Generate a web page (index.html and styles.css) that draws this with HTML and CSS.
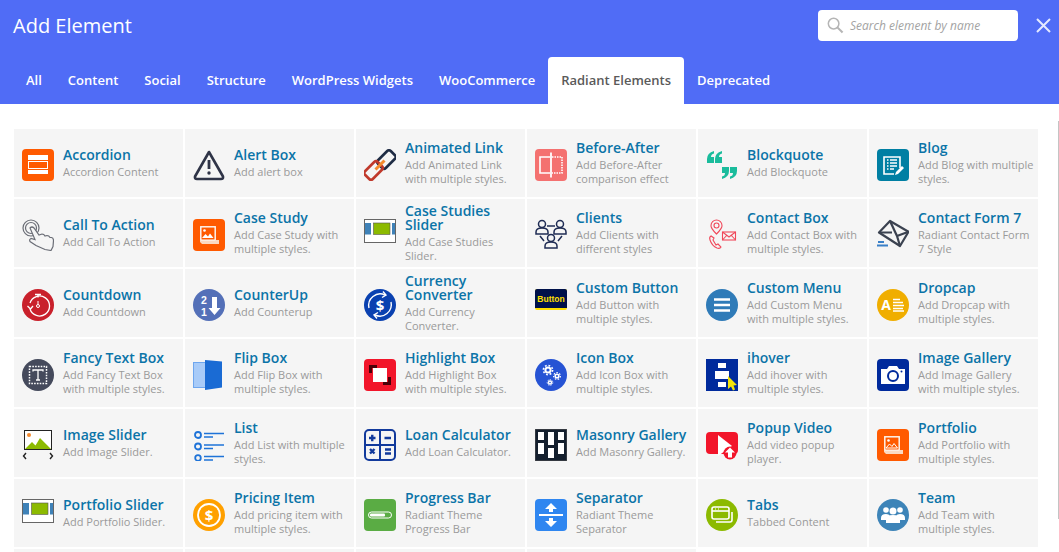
FILE: index.html
```html
<!DOCTYPE html>
<html lang="en">
<head>
    <meta charset="UTF-8">
    <meta name="viewport" content="width=device-width, initial-scale=1.0">
    <title>Add Element</title>
    <link rel="stylesheet" href="styles.css">
</head>
<body>

    <header class="top">
        <div class="top-row">
            <h1>Add Element</h1>
            <div class="search">
                <svg class="search-icon" viewBox="0 0 18 18"><circle cx="7" cy="7" r="5.6" fill="none" stroke="#b5b5b5" stroke-width="1.6"/><path d="M11 11l5.5 5.5" stroke="#b5b5b5" stroke-width="2.2"/></svg>
                <span class="search-text">Search element by name</span>
            </div>
            <svg class="close" viewBox="0 0 15 15"><path d="M1 1l13 13M14 1L1 14" stroke="#e4e9ff" stroke-width="2"/></svg>
        </div>
        <nav class="tabs">
            <a class="tab">All</a>
            <a class="tab">Content</a>
            <a class="tab">Social</a>
            <a class="tab">Structure</a>
            <a class="tab">WordPress Widgets</a>
            <a class="tab">WooCommerce</a>
            <a class="tab active">Radiant Elements</a>
            <a class="tab">Deprecated</a>
        </nav>
    </header>

    <section class="grid">

        <!-- row 1 -->
        <div class="item">
            <svg class="icon" viewBox="0 0 32 32"><rect width="32" height="32" rx="4" fill="#ff5a00"/><rect x="6" y="6" width="20" height="5" fill="#fff"/><rect x="6.500" y="12.500" width="19" height="7" fill="none" stroke="#fff"/><rect x="6" y="21" width="20" height="4" fill="#fff"/></svg>
            <div class="text"><div class="name">Accordion</div><div class="desc">Accordion Content</div></div>
        </div>
        <div class="item">
            <svg class="icon" viewBox="0 0 32 32"><path d="M16 3L30 27.500Q30.500 30 28 30H4Q1.500 30 2 27.500Z" fill="none" stroke="#2f3447" stroke-width="2.600" stroke-linejoin="round"/><path d="M16 11v9" stroke="#2f3447" stroke-width="2.800"/><circle cx="16" cy="24" r="1.700" fill="#2f3447"/></svg>
            <div class="text"><div class="name">Alert Box</div><div class="desc">Add alert box</div></div>
        </div>
        <div class="item">
            <svg class="icon" viewBox="0 0 32 32"><rect x="17" y="1.500" width="11" height="18" rx="2.500" transform="rotate(45 22.500 10.500)" fill="none" stroke="#1f2c44" stroke-width="2.600"/><rect x="4" y="12.500" width="11" height="18" rx="2.500" transform="rotate(45 9.500 21.500)" fill="none" stroke="#c0392b" stroke-width="2.600"/><path d="M11.500 20.500L20.500 11.500" stroke="#f58a2c" stroke-width="3"/></svg>
            <div class="text"><div class="name">Animated Link</div><div class="desc">Add Animated Link with multiple styles.</div></div>
        </div>
        <div class="item">
            <svg class="icon" viewBox="0 0 32 32"><rect width="32" height="32" rx="4" fill="#f47170"/><path d="M15 8H5v16h10" fill="none" stroke="#fff" stroke-width="1.600"/><path d="M17 8h10v16H17" fill="none" stroke="#fff" stroke-width="1.600" stroke-dasharray="1.500 1"/><path d="M16 3.500v25" stroke="#fff" stroke-width="1.800"/></svg>
            <div class="text"><div class="name">Before-After</div><div class="desc">Add Before-After comparison effect</div></div>
        </div>
        <div class="item">
            <svg class="icon" viewBox="0 0 32 32"><path d="M8 2Q1 4 1 10v4h7V8H5Q5 5 8 4.500ZM16 2Q9 4 9 10v4h7V8h-3q0-3 3-3.500Z" fill="#1abc9c"/><path d="M16 18v6h3q0 3-3 3.500V30q7-2 7-8v-4ZM24 18v6h3q0 3-3 3.500V30q7-2 7-8v-4Z" fill="#1abc9c"/></svg>
            <div class="text"><div class="name">Blockquote</div><div class="desc">Add Blockquote</div></div>
        </div>
        <div class="item">
            <svg class="icon" viewBox="0 0 32 32"><rect width="32" height="32" rx="4" fill="#007fa3"/><path d="M23 19V8H7v17h10" fill="none" stroke="#fff" stroke-width="1.600"/><path d="M10 11h1.500M13 11h7M10 14h1.500M13 14h7M10 17h1.500M13 17h7M10 20h1.500M13 20h4" stroke="#fff" stroke-width="1.400"/><path d="M18 26l1-3 6-6 2 2-6 6Z" fill="#fff"/></svg>
            <div class="text"><div class="name">Blog</div><div class="desc">Add Blog with multiple styles.</div></div>
        </div>

        <!-- row 2 -->
        <div class="item">
            <svg class="icon" viewBox="0 0 32 32"><g fill="none" stroke="#6a6d76" stroke-width="1.200"><circle cx="9" cy="9" r="8"/><circle cx="9" cy="9" r="5.500"/><path d="M8 9q2-2 4 0l5 7 3-1q2 0 3 2l2-.5q2 0 3 2l1.500 0q2 .5 2 3l-.5 6-2 4-6-1-9-4-6-4q-1-2 1-3l4 1Z" fill="#f5f5f5"/></g></svg>
            <div class="text"><div class="name">Call To Action</div><div class="desc">Add Call To Action</div></div>
        </div>
        <div class="item">
            <svg class="icon" viewBox="0 0 32 32"><rect width="32" height="32" rx="4" fill="#ff5a00"/><path d="M7 7h16v14h3v4H9l-2-2Z" fill="#fbd9c2"/><rect x="8" y="8" width="14" height="13" fill="#ff5a00" stroke="#fff"/><circle cx="11.500" cy="11.500" r="1.300" fill="#fff"/><path d="M9 19l3.500-4 2.500 2.500 2-3 3.500 4.500Z" fill="#fff"/></svg>
            <div class="text"><div class="name">Case Study</div><div class="desc">Add Case Study with multiple styles.</div></div>
        </div>
        <div class="item">
            <svg class="icon" viewBox="0 0 32 32"><rect x=".5" y=".5" width="31" height="23" fill="#fff" stroke="#666"/><rect x="1" y="4" width="6" height="11.500" fill="#3f82b8"/><rect x="28" y="4" width="3" height="11.500" fill="#3f82b8"/><rect x="9.500" y="4" width="16.500" height="11.500" fill="#8cba00" stroke="#555" stroke-width=".6"/></svg>
            <div class="text"><div class="name">Case Studies Slider</div><div class="desc">Add Case Studies Slider.</div></div>
        </div>
        <div class="item">
            <svg class="icon" viewBox="0 0 32 32"><g fill="none" stroke="#1f2c54" stroke-width="1.500"><circle cx="7" cy="5" r="3.500"/><path d="M1 15v-2q0-4 6-4t6 4v2Z"/><circle cx="25" cy="5" r="3.500"/><path d="M19 15v-2q0-4 6-4t6 4v2Z"/><circle cx="16" cy="19" r="3.500"/><path d="M10 29v-2q0-4 6-4t6 4v2Z"/><path d="M12 7h8M5 17l4 5M27 17l-4 5"/></g></svg>
            <div class="text"><div class="name">Clients</div><div class="desc">Add Clients with different styles</div></div>
        </div>
        <div class="item">
            <svg class="icon" viewBox="0 0 32 32"><g fill="none" stroke="#f0485a" stroke-width="1.100"><path d="M10.500 15Q4.500 9 5 6.500a5.500 5.500 0 0 1 11 0Q16.500 9 10.500 15Z"/><circle cx="10.500" cy="6.500" r="2.500"/><rect x="16.500" y="13" width="13" height="8"/><path d="M16.500 13l6.500 5 6.500-5M16.500 21l4.500-5M29.500 21L25 16"/><path d="M5 17q-2 1-1 4 2 6 7 8 3 1 4-1l-3-3-2 1-3-5 1-2Z"/></g></svg>
            <div class="text"><div class="name">Contact Box</div><div class="desc">Add Contact Box with multiple styles.</div></div>
        </div>
        <div class="item">
            <svg class="icon" viewBox="0 0 32 32"><g fill="none" stroke="#3b4250" stroke-width="2.200" stroke-linejoin="round"><path d="M2 13.500L13 2l18.500 10.700L23 27Z"/><path d="M13 2l7 15 11.500-4.300M2 13.500l13 0M23 27l-3-10"/></g><path d="M1 23h6M0 26.500h11" stroke="#3a80c8" stroke-width="1.800"/></svg>
            <div class="text"><div class="name">Contact Form 7</div><div class="desc">Radiant Contact Form 7 Style</div></div>
        </div>

        <!-- row 3 -->
        <div class="item">
            <svg class="icon" viewBox="0 0 32 32"><circle cx="16" cy="16" r="16" fill="#c9202b"/><path d="M8 14a10 10 0 1 1 0 6" fill="none" stroke="#fff" stroke-width="1.300"/><path d="M5.500 17l3 3 2.500-3" fill="none" stroke="#fff" stroke-width="1.300"/><path d="M13 5.500h6M16 5.500v3" stroke="#fff" stroke-width="1.300"/><circle cx="16" cy="17" r="1.500" fill="none" stroke="#fff"/><path d="M16 12v3.500" stroke="#fff"/></svg>
            <div class="text"><div class="name">Countdown</div><div class="desc">Add Countdown</div></div>
        </div>
        <div class="item">
            <svg class="icon" viewBox="0 0 32 32"><circle cx="16" cy="16" r="16" fill="#5470b8"/><text class="svg-num" x="8" y="14.800">2</text><text class="svg-num" x="8" y="27.300">1</text><path d="M19 8h5v11h3.500L21.500 26l-6-7H19Z" fill="#fff"/></svg>
            <div class="text"><div class="name">CounterUp</div><div class="desc">Add Counterup</div></div>
        </div>
        <div class="item">
            <svg class="icon" viewBox="0 0 32 32"><circle cx="16" cy="16" r="16" fill="#0a41b0"/><path d="M5 19a11.500 11.500 0 0 1 16-13M27 13a11.500 11.500 0 0 1-16 13" fill="none" stroke="#fff" stroke-width="1.400"/><path d="M19 2.500l3 3.500-4 2.500M13 29.500L10 26l4-2.500" fill="none" stroke="#fff" stroke-width="1.400"/><text class="svg-dollar" x="16" y="21.500">$</text></svg>
            <div class="text"><div class="name">Currency Converter</div><div class="desc">Add Currency Converter.</div></div>
        </div>
        <div class="item">
            <svg class="icon" viewBox="0 0 32 32"><rect width="32" height="21" rx="2" fill="#ffe000"/><path d="M0 2a2 2 0 0 1 2-2h28a2 2 0 0 1 2 2v17H0Z" fill="#00114a"/><text class="svg-button" x="16" y="12.500">Button</text></svg>
            <div class="text"><div class="name">Custom Button</div><div class="desc">Add Button with multiple styles.</div></div>
        </div>
        <div class="item">
            <svg class="icon" viewBox="0 0 32 32"><circle cx="16" cy="16" r="16" fill="#2f7bb8"/><path d="M8 10.500h16M8 16h16M8 21.500h16" stroke="#fff" stroke-width="2.600"/></svg>
            <div class="text"><div class="name">Custom Menu</div><div class="desc">Add Custom Menu with multiple styles.</div></div>
        </div>
        <div class="item">
            <svg class="icon" viewBox="0 0 32 32"><circle cx="16" cy="16" r="16" fill="#f0ae00"/><text class="svg-drop" x="9" y="21">A</text><path d="M16 10.500h7M16 13.500h10M16 16.500h11M16 19.500h10M16 22h11" stroke="#fff" stroke-width="1.500"/></svg>
            <div class="text"><div class="name">Dropcap</div><div class="desc">Add Dropcap with multiple styles.</div></div>
        </div>

        <!-- row 4 -->
        <div class="item">
            <svg class="icon" viewBox="0 0 32 32"><circle cx="16" cy="16" r="16" fill="#454a5c"/><rect x="7.500" y="7.500" width="17" height="17" fill="none" stroke="#fff" stroke-width="1.500" stroke-dasharray="1.600 1.200"/><path d="M11 12.500V11h10v1.500M16 11v10M14 21h4" fill="none" stroke="#fff" stroke-width="1.300"/></svg>
            <div class="text"><div class="name">Fancy Text Box</div><div class="desc">Add Fancy Text Box with multiple styles.</div></div>
        </div>
        <div class="item">
            <svg class="icon" viewBox="0 0 32 32"><rect x=".5" y="3.500" width="12" height="25" fill="#a8cbf8" stroke="#6ea6ee"/><path d="M12 1l17 1.500v26L12 31Z" fill="#1a6bd4"/></svg>
            <div class="text"><div class="name">Flip Box</div><div class="desc">Add Flip Box with multiple styles.</div></div>
        </div>
        <div class="item">
            <svg class="icon" viewBox="0 0 32 32"><rect width="32" height="32" rx="4" fill="#f2152a"/><path d="M5 14V6h8v3H8v5ZM27 18v8h-8v-3h5v-5Z" fill="#4a0008"/><rect x="9" y="9" width="14" height="14" fill="#fff"/></svg>
            <div class="text"><div class="name">Highlight Box</div><div class="desc">Add Highlight Box with multiple styles.</div></div>
        </div>
        <div class="item">
            <svg class="icon" viewBox="0 0 32 32"><circle cx="16" cy="16" r="16" fill="#2653d4"/><g fill="none" stroke="#fff"><circle cx="13" cy="11" r="2.600" stroke-width="2"/><circle cx="13" cy="11" r="4.600" stroke-width="1.600" stroke-dasharray="1.800 1.800"/><circle cx="22" cy="17" r="1.800" stroke-width="1.600"/><circle cx="22" cy="17" r="3.400" stroke-width="1.200" stroke-dasharray="1.500 1.500"/><circle cx="15" cy="23.500" r="1.500" stroke-width="1.400"/><circle cx="15" cy="23.500" r="2.800" stroke-width="1" stroke-dasharray="1.300 1.200"/></g></svg>
            <div class="text"><div class="name">Icon Box</div><div class="desc">Add Icon Box with multiple styles.</div></div>
        </div>
        <div class="item">
            <svg class="icon" viewBox="0 0 32 32"><rect width="32" height="32" fill="#002a9c"/><rect x="12" y="4" width="8" height="5" fill="#fff"/><rect x="9" y="12" width="14" height="8" fill="#fff"/><rect x="12" y="23" width="8" height="5" fill="#fff"/><path d="M22 17l9 9-3.500.5 1.500 4-2 1-2-4-3 2.500Z" fill="#f5e50a"/></svg>
            <div class="text"><div class="name">ihover</div><div class="desc">Add ihover with multiple styles.</div></div>
        </div>
        <div class="item">
            <svg class="icon" viewBox="0 0 32 32"><rect width="32" height="32" rx="4" fill="#002a9c"/><path d="M4 10h6l2-3h8l2 3h6v15H4Z" fill="#fff"/><circle cx="16" cy="17" r="5" fill="#fff" stroke="#002a9c" stroke-width="2"/><circle cx="24.500" cy="12.500" r="1" fill="#002a9c"/></svg>
            <div class="text"><div class="name">Image Gallery</div><div class="desc">Add Image Gallery with multiple styles.</div></div>
        </div>

        <!-- row 5 -->
        <div class="item">
            <svg class="icon" viewBox="0 0 32 32"><rect x="2.500" y="1.500" width="27" height="19" fill="#fff" stroke="#222"/><path d="M3 20l7-7 3.500 3.500L18 9l11 11Z" fill="#8cba00"/><circle cx="7" cy="6" r="2" fill="#f58a2c"/><path d="M4 24l-2.500 3L4 30M28 24l2.500 3-2.500 3" fill="none" stroke="#222" stroke-width="1.400"/></svg>
            <div class="text"><div class="name">Image Slider</div><div class="desc">Add Image Slider.</div></div>
        </div>
        <div class="item">
            <svg class="icon" viewBox="0 0 32 32"><g fill="none" stroke="#1e73d8"><circle cx="5" cy="6" r="3" stroke-width="1.800"/><circle cx="5" cy="17.500" r="3" stroke-width="1.800"/><circle cx="5" cy="29" r="2.800" stroke-width="1.800"/><path d="M11 4.500h20M11 8h9M11 16h20M11 19.500h9M11 27.500h20M11 31h9" stroke-width="1.600"/></g></svg>
            <div class="text"><div class="name">List</div><div class="desc">Add List with multiple styles.</div></div>
        </div>
        <div class="item">
            <svg class="icon" viewBox="0 0 32 32"><rect x="1" y="1" width="30" height="30" rx="4" fill="none" stroke="#123a9c" stroke-width="2"/><path d="M16 1v30M1 16h30" stroke="#123a9c" stroke-width="2"/><path d="M5 9h6.500M8.250 5.750v6.500M20.500 9h6.500M6 20l4.500 4.500M10.500 20L6 24.500M21 20.500h6M21 24.500h6" stroke="#123a9c" stroke-width="2.400"/></svg>
            <div class="text"><div class="name">Loan Calculator</div><div class="desc">Add Loan Calculator.</div></div>
        </div>
        <div class="item">
            <svg class="icon" viewBox="0 0 32 32"><rect width="32" height="32" fill="#141f2e" stroke="#555" stroke-width="1"/><g fill="#fff"><rect x="3" y="3" width="6" height="8"/><rect x="3" y="14" width="6" height="11"/><rect x="13" y="3" width="6" height="13"/><rect x="13" y="19" width="6" height="10"/><rect x="23" y="3" width="6" height="8"/><rect x="23" y="14" width="6" height="11"/></g></svg>
            <div class="text"><div class="name">Masonry Gallery</div><div class="desc">Add Masonry Gallery.</div></div>
        </div>
        <div class="item">
            <svg class="icon" viewBox="0 0 32 32"><rect y="3" width="32" height="22" rx="4" fill="#f2152a"/><path d="M12 6l14 11-14 10Z" fill="#fff"/><circle cx="24" cy="24" r="6.500" fill="#f2152a"/><path d="M24 18.500l-5 5h3v5h4v-5h3Z" fill="#fff"/></svg>
            <div class="text"><div class="name">Popup Video</div><div class="desc">Add video popup player.</div></div>
        </div>
        <div class="item">
            <svg class="icon" viewBox="0 0 32 32"><rect width="32" height="32" rx="4" fill="#ff5a00"/><path d="M7 7h16v14h3v4H9l-2-2Z" fill="#fbd9c2"/><rect x="8" y="8" width="14" height="13" fill="#ff5a00" stroke="#fff"/><circle cx="11.500" cy="11.500" r="1.300" fill="#fff"/><path d="M9 19l3.500-4 2.500 2.500 2-3 3.500 4.500Z" fill="none" stroke="#fff"/></svg>
            <div class="text"><div class="name">Portfolio</div><div class="desc">Add Portfolio with multiple styles.</div></div>
        </div>

        <!-- row 6 -->
        <div class="item">
            <svg class="icon" viewBox="0 0 32 32"><rect x=".5" y=".5" width="31" height="23" fill="#fff" stroke="#666"/><rect x="1" y="4" width="6" height="11.500" fill="#3f82b8"/><rect x="28" y="4" width="3" height="11.500" fill="#3f82b8"/><rect x="9.500" y="4" width="16.500" height="11.500" fill="#8cba00" stroke="#555" stroke-width=".6"/></svg>
            <div class="text"><div class="name">Portfolio Slider</div><div class="desc">Add Portfolio Slider.</div></div>
        </div>
        <div class="item">
            <svg class="icon" viewBox="0 0 32 32"><circle cx="16" cy="16" r="16" fill="#ffa000"/><circle cx="16" cy="16" r="11" fill="none" stroke="#fff" stroke-width="1.800"/><text class="svg-dollar" x="16" y="21.500">$</text></svg>
            <div class="text"><div class="name">Pricing Item</div><div class="desc">Add pricing item with multiple styles.</div></div>
        </div>
        <div class="item">
            <svg class="icon" viewBox="0 0 32 32"><rect width="32" height="32" rx="4" fill="#5aac44"/><rect x="4.500" y="13" width="23" height="6" rx="3" fill="none" stroke="#fff"/><rect x="6" y="14.500" width="15" height="3" rx="1" fill="#fff"/></svg>
            <div class="text"><div class="name">Progress Bar</div><div class="desc">Radiant Theme Progress Bar</div></div>
        </div>
        <div class="item">
            <svg class="icon" viewBox="0 0 32 32"><rect width="32" height="32" rx="4" fill="#2f86f0"/><path d="M4 16h24" stroke="#fff" stroke-width="2"/><path d="M16 4l-6 6h4v3h4v-3h4ZM16 28l-6-6h4v-3h4v3h4Z" fill="#fff"/></svg>
            <div class="text"><div class="name">Separator</div><div class="desc">Radiant Theme Separator</div></div>
        </div>
        <div class="item">
            <svg class="icon" viewBox="0 0 32 32"><circle cx="16" cy="16" r="16" fill="#8cba00"/><rect x="6" y="8" width="17" height="12" rx="2" fill="none" stroke="#fff" stroke-width="1.600"/><path d="M6 12h17" stroke="#fff" stroke-width="1.600"/><path d="M9 10h1M12 10h1" stroke="#fff"/><path d="M26 13v8a2 2 0 0 1-2 2H10" fill="none" stroke="#fff" stroke-width="1.600"/></svg>
            <div class="text"><div class="name">Tabs</div><div class="desc">Tabbed Content</div></div>
        </div>
        <div class="item">
            <svg class="icon" viewBox="0 0 32 32"><circle cx="16" cy="16" r="16" fill="#3d84b8"/><g fill="#fff"><circle cx="9" cy="11" r="2.800"/><circle cx="23" cy="11" r="2.800"/><path d="M4 21v-2q0-4 5-4 3 0 4 2l-3 4ZM28 21v-2q0-4-5-4-3 0-4 2l3 4Z"/><circle cx="16" cy="12" r="3.500"/><path d="M9 24v-3q0-5 7-5t7 5v3Z"/></g></svg>
            <div class="text"><div class="name">Team</div><div class="desc">Add Team with multiple styles.</div></div>
        </div>

        <!-- next row, cut off by the window -->
        <div class="item"></div>
        <div class="item"></div>
        <div class="item"></div>
        <div class="item"></div>
    </section>

    <div class="scroll-thumb"></div>

</body>
</html>
```

FILE: styles.css
```css
html, body {
    height: 100%;
}

body {
    margin: 0;
    overflow: hidden;
    background-color: #fff;
    font-family: "Open Sans", sans-serif;
}

.top {
    background-color: #506cf6;
    height: 104px;
    color: #fff;
}

.top-row {
    display: flex;
    align-items: center;
    height: 57px;
    padding: 0 8px 6px 13px;
    box-sizing: border-box;
}

h1 {
    flex: 1;
    margin: 0;
    font-size: 20px;
    font-weight: 400;
}

.search {
    display: flex;
    align-items: center;
    width: 200px;
    height: 31px;
    padding-left: 9px;
    box-sizing: border-box;
    background-color: #fff;
    border-radius: 4px;
}

.search-icon {
    width: 17px;
    height: 17px;
    margin-right: 6px;
}

.search-text {
    font-size: 12px;
    font-style: italic;
    color: #a3a3a3;
}

.close {
    width: 15px;
    height: 15px;
    margin-left: 18px;
}

.tabs {
    display: flex;
    padding-left: 13px;
    height: 47px;
}

.tab {
    padding: 0 13px;
    font-size: 13px;
    font-weight: 600;
    line-height: 47px;
}

.tab.active {
    background-color: #fff;
    color: #5a5a5a;
    border-radius: 4px 4px 0 0;
}

.grid {
    display: grid;
    grid-template-columns: repeat(6, 169px);
    grid-auto-rows: 68px;
    gap: 2px;
    margin: 25px 0 0 14px;
}

.item {
    display: flex;
    align-items: center;
    gap: 9px;
    padding: 0 4px 0 8px;
    background-color: #f5f5f5;
    min-width: 0;
}

.icon {
    flex: none;
    width: 32px;
    height: 32px;
    margin-top: 4px;
}

.text {
    margin-top: 1px;
    min-width: 0;
}

.name {
    font-size: 14px;
    font-weight: 600;
    line-height: 14px;
    color: #0b74a8;
    margin-bottom: 3px;
}

.desc {
    font-size: 11px;
    line-height: 14px;
    color: #9a9a9a;
}

/* thin scrollbar at the window edge, sits over the page */
.scroll-thumb {
    position: absolute;
    top: 121px;
    right: 0;
    width: 1px;
    height: 398px;
    background-color: #c4c4c4;
}

.svg-num {
    font-family: "Liberation Sans", sans-serif;
    font-size: 10.500px;
    font-weight: 700;
    fill: #fff;
}

.svg-dollar {
    font-size: 15px;
    font-weight: 700;
    text-anchor: middle;
    fill: #fff;
}

.svg-button {
    font-family: "Liberation Sans", sans-serif;
    font-size: 8.500px;
    font-weight: 700;
    text-anchor: middle;
    fill: #ffe000;
}

.svg-drop {
    font-size: 14px;
    font-weight: 700;
    text-anchor: middle;
    fill: #fff;
}
```
